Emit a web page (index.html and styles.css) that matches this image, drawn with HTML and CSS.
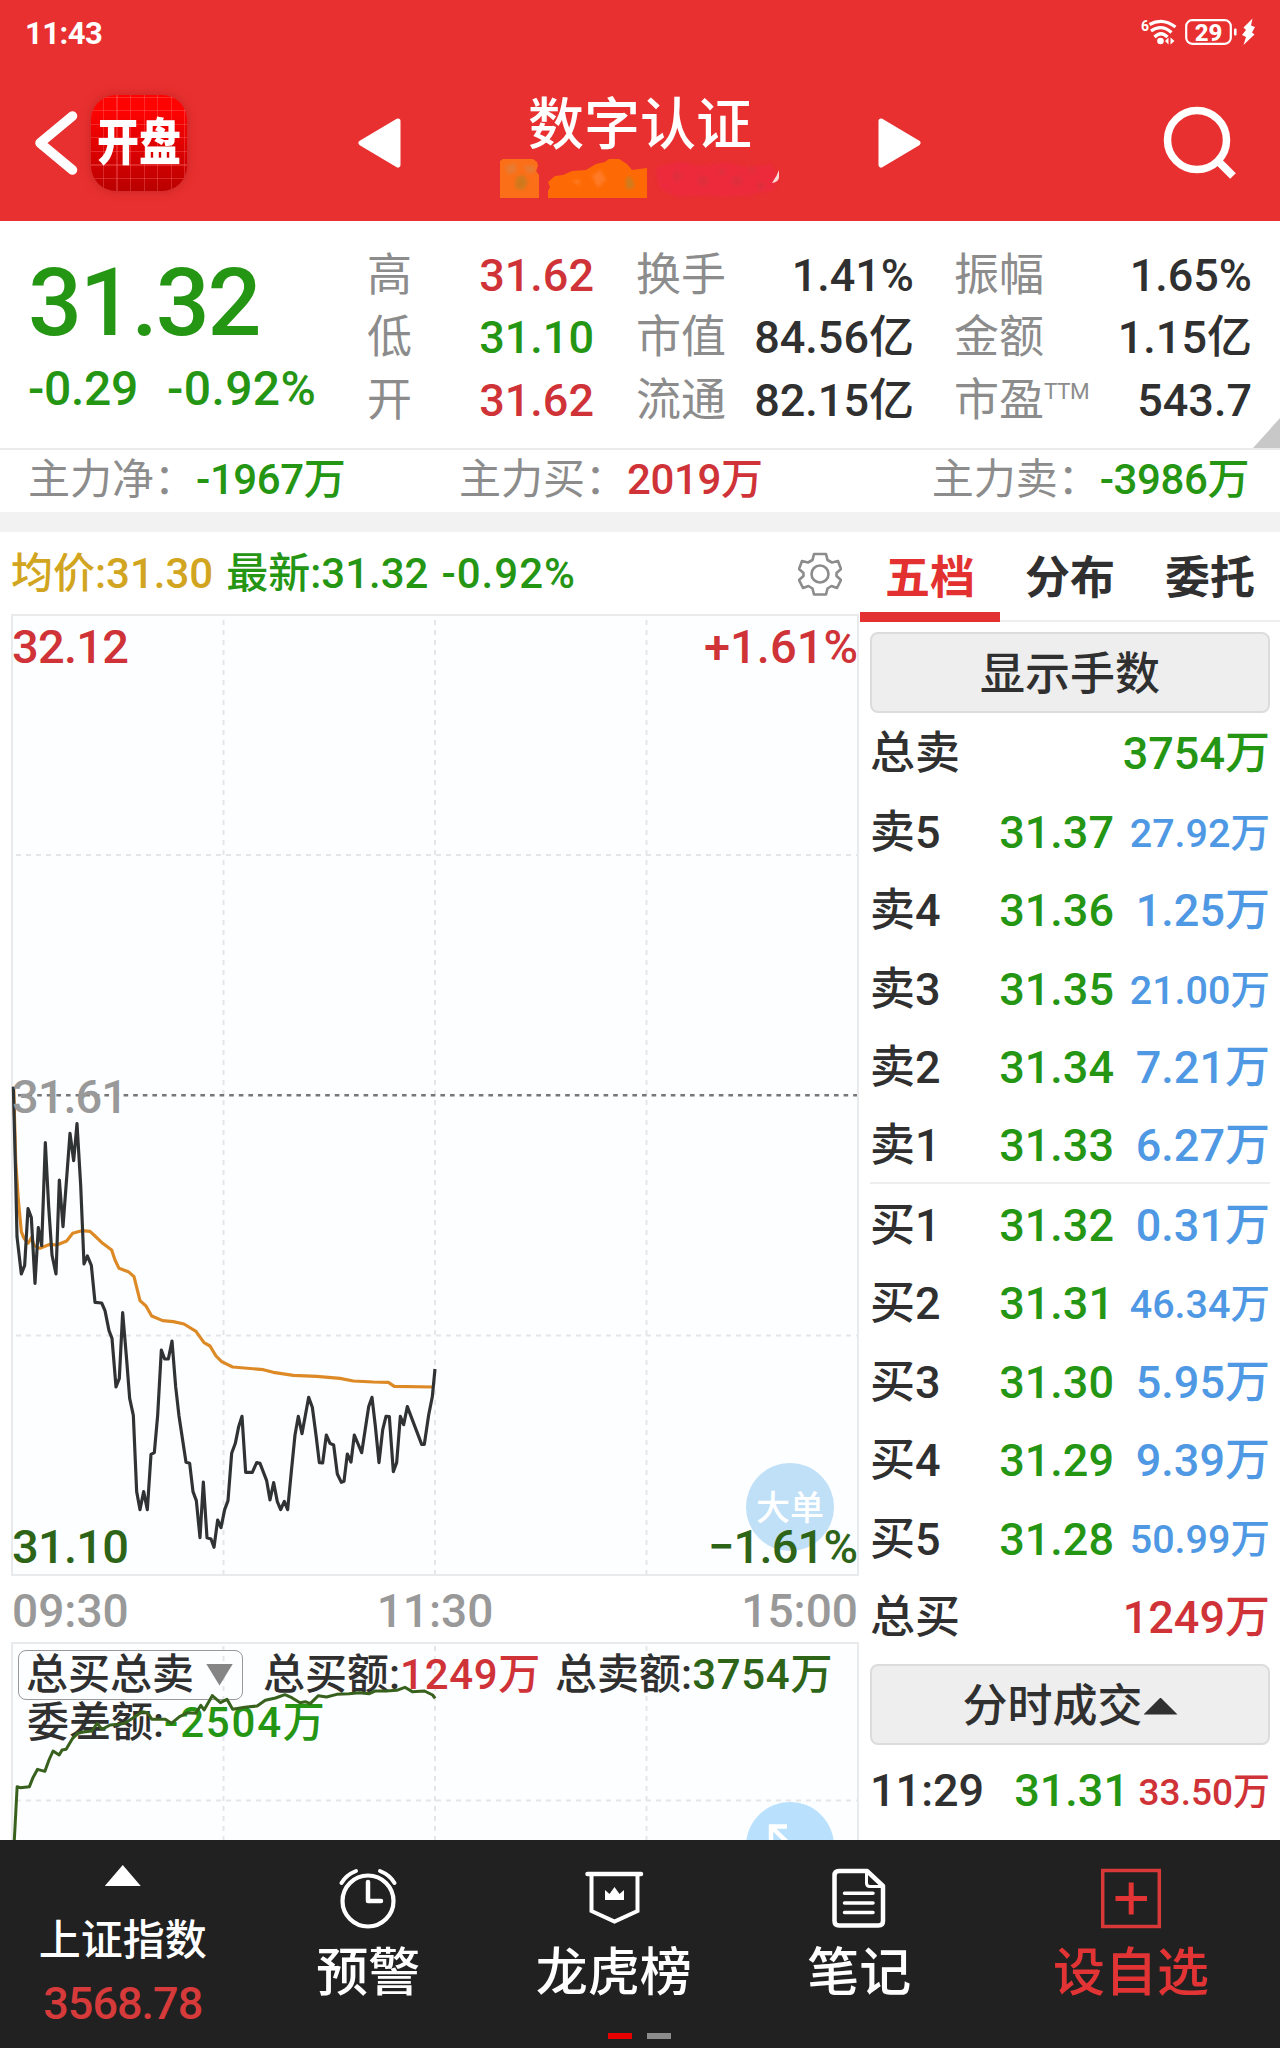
FILE: index.html
```html
<!DOCTYPE html>
<html lang="zh-CN">
<head>
<meta charset="utf-8">
<title>数字认证</title>
<link rel="stylesheet" href="styles.css">
</head>
<body>
<div class="app">
  <header class="top">
    <div class="status">
      <span class="clock">11:43</span>
      <svg class="status-icons" width="116" height="30" viewBox="1140 17 116 30">
        <text x="1141" y="30.500" class="wifi-gen" textLength="8" lengthAdjust="spacingAndGlyphs">6</text>
        <g fill="none" stroke="#fff" stroke-width="3.200">
          <path d="M1149.500 24.500Q1162.500 17 1175.500 27"/>
          <path d="M1151 31Q1161.500 23.500 1171.500 32.500"/>
          <path d="M1154.500 37Q1161 30.500 1167.500 37"/>
        </g>
        <circle cx="1160.500" cy="41" r="3.300" fill="#fff"/>
        <path d="M1168.500 37.500v7l-3.500-3.500zM1170.500 37.500v7l4-3.500z" fill="#fff"/>
        <rect x="1186.200" y="20.200" width="44.600" height="23.600" rx="6" fill="none" stroke="#fff" stroke-width="2.200"/>
        <text x="1208.500" y="40.500" text-anchor="middle" class="battery">29</text>
        <rect x="1234" y="28.500" width="2.600" height="7" rx="1" fill="#fff"/>
        <path d="M1252.500 18.500L1243.500 27.500L1246 30L1242 35L1246 37L1243.500 45L1254.500 34.500L1252 32.500L1255 27L1251 25.500Z" fill="#fff"/>
      </svg>
    </div>
    <div class="titlebar">
      <svg class="back" width="46" height="66" viewBox="0 0 46 66"><path d="M39.500 6L7 33L39.500 60" fill="none" stroke="#fff" stroke-width="9.500" stroke-linecap="round" stroke-linejoin="round"/></svg>
      <div class="logo"><span>开盘</span></div>
      <svg class="prev" width="46" height="52" viewBox="0 0 46 52"><path d="M42 4L5 26L42 48Z" fill="#fff" stroke="#fff" stroke-width="5" stroke-linejoin="round"/></svg>
      <div class="stock">
        <h1>数字认证</h1>
        <svg width="290" height="44" viewBox="495 157 290 44">
          <defs><filter id="soft" x="-10%" y="-20%" width="120%" height="140%"><feGaussianBlur stdDeviation="1.800"/></filter></defs>
          <path d="M500 161l3-2h30l4 3 1 4-2 5 3 4v23h-39z" fill="#fb6f18"/>
          <path d="M548 198v-7l2-4-2-5 7-6 8-1 9-4 14-1 10-6 9-2 4-3h10l8 5 5 6 15-2v30z" fill="#fd6a05"/>
          <g filter="url(#soft)">
            <path d="M505 166l10-3 2 8-9 4zM524 166l9-1 3 6-8 3z" fill="#e87a30"/>
            <path d="M516 177l8-2 4 8-5 7-8-2z" fill="#d0791d"/>
            <path d="M592 176l8-6 6 9-8 9zM572 182l6-3 3 6z" fill="#ff7a26"/>
            <path d="M626 178l4-2 4 7v5l-8 1z" fill="#cf7c1c"/>
            <path d="M655 168l25-7 20 5 26-4 23 5 22-3 8 14-5 12-24 5-23 2-25-2-24 2-18-8z" fill="#ee2a42" opacity=".6"/>
            <g fill="#d0323e" opacity=".45"><circle cx="677" cy="176" r="4"/><circle cx="703" cy="181" r="5"/><circle cx="722" cy="172" r="3"/><circle cx="737" cy="181" r="5"/><circle cx="752" cy="170" r="3"/><circle cx="761" cy="186" r="4"/></g>
          </g>
          <path d="M779 170Q777 176 772 183Q779 182 779 177Z" fill="#fbd9d5"/>
        </svg>
      </div>
      <svg class="next" width="46" height="52" viewBox="0 0 46 52"><path d="M4 4L41 26L4 48Z" fill="#fff" stroke="#fff" stroke-width="5" stroke-linejoin="round"/></svg>
      <svg class="search" width="76" height="76" viewBox="0 0 76 76"><circle cx="36" cy="35" r="29.500" fill="none" stroke="#fff" stroke-width="7.500"/><path d="M57 56L72 71" stroke="#fff" stroke-width="8"/></svg>
    </div>
  </header>

  <section class="quote">
    <div class="price">
      <strong>31.32</strong>
      <div class="change"><span>-0.29</span><span class="pct">-0.92%</span></div>
    </div>
    <dl class="stats s1">
      <div><dt>高</dt><dd class="red">31.62</dd></div>
      <div><dt>低</dt><dd class="green">31.10</dd></div>
      <div><dt>开</dt><dd class="red">31.62</dd></div>
    </dl>
    <dl class="stats s2">
      <div><dt>换手</dt><dd>1.41%</dd></div>
      <div><dt>市值</dt><dd>84.56亿</dd></div>
      <div><dt>流通</dt><dd>82.15亿</dd></div>
    </dl>
    <dl class="stats s3">
      <div><dt>振幅</dt><dd>1.65%</dd></div>
      <div><dt>金额</dt><dd>1.15亿</dd></div>
      <div><dt>市盈<sup>TTM</sup></dt><dd>543.7</dd></div>
    </dl>
    <i class="corner"></i>
  </section>

  <section class="flow">
    <div><span>主力净：</span><b class="green">-1967万</b></div>
    <div><span>主力买：</span><b class="red">2019万</b></div>
    <div><span>主力卖：</span><b class="green">-3986万</b></div>
  </section>

  <main class="main">
    <section class="left">
      <div class="legend">
        <span class="gold">均价:31.30</span><span class="green">最新:31.32</span><span class="green latest">-0.92%</span>
        <svg class="gear" width="44" height="46" viewBox="-22 -23 44 46"><g fill="none" stroke="#8c8c8c" stroke-width="2.600" stroke-linejoin="round"><path d="M-6-20H6L7.500-14L12-11.500L18-13L21-5L16.500-1V2L21 6L17 14L11.500 12L7.500 14.500L6 20.500H-6L-7.500 14.500L-11.500 12L-17 14L-21 6L-16.500 2V-1L-21-5L-18-13L-12-11.500L-7.500-14Z"/><circle r="8.500"/></g></svg>
      </div>
      <svg class="chart" width="860" height="962" viewBox="0 614 860 962">
        <rect x="12" y="615" width="846" height="960" class="frame"/>
        <path class="grid" d="M223.500 620V1574M435 620V1574M646.500 620V1574M16 855H857M16 1335.500H857"/>
        <circle cx="790" cy="1507" r="44" fill="#c0e0f7"/>
        <text x="790" y="1520" text-anchor="middle" class="bubble">大单</text>
        <path d="M18 1095.300H857" stroke="#777" stroke-width="2.500" stroke-dasharray="4.600 5"/>
        <g transform="translate(0 1060) scale(.33333)" fill="none" stroke-linejoin="round">
          <path stroke="#dd8a26" stroke-width="9.500" d="M41 80L47 300L55 420L64 515L72 535L84 550L95 532L102 556L120 565L150 553L170 555L200 543L218 520L245 512L270 514L285 528L308 550L335 570L345 600L357 625L385 635L402 650L420 722L438 738L455 768L488 782L520 785L552 792L588 814L612 848L630 858L648 888L665 905L698 921L790 929L820 937L880 946L950 949L1020 955L1060 963L1120 966L1165 967L1183 979L1300 981"/>
          <path stroke="#303333" stroke-width="9.500" d="M40 80L47 350L51 530L64 642L74 616L84 446L94 473L105 670L115 503L125 557L136 248L146 440L156 585L168 642L178 360L189 500L210 220L221 302L231 191L242 375L252 612L262 588L274 616L285 727L305 729L315 752L327 812L336 835L348 981L358 955L368 758L380 900L389 1015L400 1066L410 1295L420 1349L431 1295L442 1349L453 1183L463 1178L473 1066L484 870L494 897L505 897L516 843L527 980L537 1068L558 1207L569 1210L579 1295L589 1322L600 1433L610 1266L621 1433L633 1437L642 1462L653 1380L663 1403L674 1349L684 1322L695 1180L706 1150L716 1100L726 1069L737 1237L757 1237L770 1208L780 1210L800 1262L810 1320L821 1268L832 1325L842 1349L853 1324L863 1349L874 1235L885 1125L895 1069L906 1121L926 1012L937 1042L948 1125L958 1208L968 1209L979 1125L990 1150L1001 1155L1012 1242L1024 1267L1032 1264L1042 1182L1053 1206L1063 1125L1085 1178L1106 1040L1116 1012L1126 1098L1137 1208L1148 1110L1158 1069L1168 1070L1180 1235L1190 1208L1201 1069L1211 1094L1222 1040L1265 1153L1273 1153L1286 1065L1297 1010L1305 927"/>
        </g>
        <g class="axis">
          <text x="12" y="663" fill="#cf3338" textLength="117">32.12</text>
          <text x="858" y="663" fill="#cf3338" text-anchor="end" textLength="154">+1.61%</text>
          <text x="12" y="1113" fill="#999" textLength="116">31.61</text>
          <text x="12" y="1563" fill="#2d6418" textLength="117">31.10</text>
          <text x="858" y="1563" fill="#2d6418" text-anchor="end" textLength="150">−1.61%</text>
        </g>
      </svg>
      <div class="times"><span>09:30</span><span>11:30</span><span>15:00</span></div>
      <div class="sub">
        <svg class="subchart" width="860" height="200" viewBox="0 1642 860 200">
          <rect x="12" y="1643" width="846" height="220" class="frame"/>
          <path class="grid" d="M223.500 1646V1841M435 1646V1841M646.500 1646V1841M16 1800.500H857"/>
          <circle cx="790" cy="1846" r="44" fill="#b9e0fd"/>
          <path d="M771 1843V1826.500H787M772 1827.500L788 1843" fill="none" stroke="#fff" stroke-width="4.500"/>
        </svg>
        <div class="sub-row"><span class="select">总买总卖<i></i></span><span>总买额:<b class="red">1249万</b></span><span>总卖额:<b class="deep">3754万</b></span></div>
        <div class="sub-row second"><span>委差额:<b class="green">-2504万</b></span></div>
        <svg class="subchart" width="860" height="200" viewBox="0 1642 860 200">
          <g transform="translate(0 1560) scale(.40816 .33333)"><path vector-effect="non-scaling-stroke" fill="none" stroke="#38611d" stroke-width="3" stroke-linejoin="round" d="M35 842L42 680L50 683L72 680L80 655L92 628L110 634L120 600L130 573L145 585L152 570L162 568L178 535L190 520L205 516L225 513L238 490L250 508L270 495L290 493L305 490L325 475L348 455L362 458L372 478L405 478L420 490L440 470L460 458L480 460L492 436L500 450L520 407L540 428L556 418L570 448L600 442L630 438L650 421L675 414L698 404L715 413L735 428L748 425L760 431L780 407L800 411L825 403L855 401L880 398L905 401L920 393L945 393L972 391L992 382L1010 395L1040 393L1060 405L1066 415"/></g>
        </svg>
      </div>
    </section>

    <aside class="book">
      <nav class="tabs"><span class="on">五档</span><span>分布</span><span>委托</span></nav>
      <div class="btn">显示手数</div>
      <div class="row"><span>总卖</span><b class="sum green">3754万</b></div>
      <div class="row"><span>卖5</span><b>31.37</b><em class="small">27.92万</em></div>
      <div class="row"><span>卖4</span><b>31.36</b><em>1.25万</em></div>
      <div class="row"><span>卖3</span><b>31.35</b><em class="small">21.00万</em></div>
      <div class="row"><span>卖2</span><b>31.34</b><em>7.21万</em></div>
      <div class="row line"><span>卖1</span><b>31.33</b><em>6.27万</em></div>
      <div class="row"><span>买1</span><b>31.32</b><em>0.31万</em></div>
      <div class="row"><span>买2</span><b>31.31</b><em class="small">46.34万</em></div>
      <div class="row"><span>买3</span><b>31.30</b><em>5.95万</em></div>
      <div class="row"><span>买4</span><b>31.29</b><em>9.39万</em></div>
      <div class="row"><span>买5</span><b>31.28</b><em class="small">50.99万</em></div>
      <div class="row"><span>总买</span><b class="sum red">1249万</b></div>
      <div class="btn deals">分时成交<i></i></div>
      <div class="row tick"><span>11:29</span><b>31.31</b><em class="red">33.50万</em></div>
    </aside>
  </main>

  <footer class="nav">
    <div class="index"><i></i><span>上证指数</span><b>3568.78</b></div>
    <div class="item">
      <svg width="62" height="62" viewBox="337 1868 62 62"><g fill="none" stroke="#fff" stroke-linecap="round"><circle cx="368" cy="1901" r="25.500" stroke-width="4.200"/><path d="M368 1882V1901H381" stroke-width="4.500" stroke-linejoin="round"/><path d="M341.500 1883Q346 1875 356 1871M394.500 1883Q390 1875 380 1871" stroke-width="4"/></g></svg>
      <span>预警</span></div>
    <div class="item">
      <svg width="62" height="62" viewBox="582 1868 62 62"><path d="M586.500 1874H640" stroke="#fff" stroke-width="4.500" stroke-linecap="round"/><path d="M590.500 1874V1911L613.500 1921.500L636.500 1911V1874" fill="none" stroke="#fff" stroke-width="4"/><path d="M604 1900V1890L608.500 1894L613.500 1887L618.500 1894L623 1890V1900Z" fill="#fff"/></svg>
      <span>龙虎榜</span></div>
    <div class="item">
      <svg width="62" height="62" viewBox="828 1868 62 62"><g fill="none" stroke="#fff" stroke-linejoin="round"><path d="M867 1871H839Q834.500 1871 834.500 1875.500V1921Q834.500 1925.500 839 1925.500H878.500Q883 1925.500 883 1921V1886Z" stroke-width="4.500"/><path d="M866.500 1872V1883Q866.500 1886.500 870 1886.500H882" stroke-width="3"/><path d="M844.500 1893.300H873M844.500 1903H873M844.500 1912.500H873" stroke-width="3.500" stroke-linecap="round"/></g></svg>
      <span>笔记</span></div>
    <div class="item add">
      <svg width="62" height="62" viewBox="1100 1868 62 62"><rect x="1102.700" y="1870.500" width="56.600" height="56" fill="none" stroke="#d93838" stroke-width="3.500"/><path d="M1115.500 1898.500H1147M1131.200 1882.500V1914.500" stroke="#e23434" stroke-width="5"/></svg>
      <span>设自选</span></div>
    <div class="pages"><i class="cur"></i><i></i></div>
  </footer>
</div>
</body>
</html>
```
FILE: styles.css
```css
* { box-sizing: border-box; }
body { margin: 0; background: #fff; color: #303030; font-family: Roboto, "Noto Sans CJK SC", sans-serif; font-weight: 500; line-height: 1; }
h1, dl, dd { margin: 0; font-weight: 500; }
b, em, strong { font-weight: 500; font-style: normal; }
svg { display: block; flex: none; }
span, b, em, dt, dd { white-space: nowrap; }
.app { width: 1280px; height: 2048px; overflow: hidden; display: flex; flex-direction: column; }
.green { color: #259514; }
.red { color: #cf3338; }
.gold { color: #d2a520; }
.deep { color: #2d6418; }

.top { height: 221px; flex: none; background: #e83030; color: #fff; }
.status { height: 64px; padding: 17px 24px 0 25px; display: flex; justify-content: space-between; }
.clock { font-size: 31px; font-weight: 700; line-height: 33px; letter-spacing: -.5px; }
.wifi-gen { font-size: 15px; font-weight: 700; fill: #fff; }
.battery { font-size: 24px; font-weight: 800; fill: #fff; }
.titlebar { height: 157px; padding: 0 43px 0 33px; display: flex; align-items: center; }
.logo { width: 96px; height: 96px; margin-left: 12px; border-radius: 25px; display: flex; align-items: center; justify-content: center;
  background: repeating-linear-gradient(90deg, transparent 0 12px, #ff777755 12px 13.500px), repeating-linear-gradient(0deg, transparent 0 12px, #ff777755 12px 13.500px), linear-gradient(#ff0303 15%, #b90000);
  box-shadow: 0 0 10px #a51c1c88; }
.logo span { font-size: 42px; font-weight: 900; transform: scaleY(1.2); }
.prev { margin-left: 169px; }
.stock { width: 290px; height: 157px; margin: 0 0 0 93px; padding-top: 32px; display: flex; flex-direction: column; align-items: center; }
.stock h1 { font-size: 56px; height: 61px; line-height: 58px; }
.next { margin-left: 92px; }
.search { margin-left: auto; }

.quote { height: 229px; flex: none; position: relative; border-bottom: 2px solid #ebebeb; display: flex; }
.price { width: 368px; padding: 34px 0 0 28px; color: #259514; }
.price strong { display: block; font-size: 95px; line-height: 96px; letter-spacing: -2.200px; }
.change { display: flex; gap: 29px; margin-top: 13px; font-size: 48px; line-height: 50px; letter-spacing: -.300px; }
.change .pct { letter-spacing: .400px; }
.stats { display: flex; flex-direction: column; padding-top: 23px; font-size: 45px; }
.stats div { height: 62.600px; display: flex; justify-content: space-between; align-items: center; }
.stats dt { color: #8c8c8c; font-weight: 400; }
.stats dt { margin-left: -1px; }
.s1 { width: 226px; }
.s2 { width: 277px; margin-left: 43px; }
.s3 { width: 297px; margin-left: 41px; }
.stats sup { font-size: 22.500px; line-height: 0; vertical-align: 17px; font-weight: 400; letter-spacing: -.500px; }
.corner { position: absolute; right: 0; bottom: 0; width: 27px; height: 30px; background: #c8c8c8; clip-path: polygon(100% 0, 100% 100%, 0 100%); }

.flow { height: 62px; flex: none; padding: 0 31px 3px 28px; display: grid; grid-template-columns: 431px 1fr auto; align-items: center; font-size: 42px; }
.flow span { color: #8c8c8c; font-weight: 400; }
.flow b { letter-spacing: -.400px; }

.main { height: 1328px; flex: none; border-top: 20px solid #f2f2f2; display: flex; }
.left { width: 860px; flex: none; }
.legend { height: 82px; padding: 2px 18px 0 11px; display: flex; align-items: center; gap: 13px; font-size: 42px; }
.latest { letter-spacing: 1px; }
.gear { margin-left: auto; }
.frame { fill: #fcfeff; stroke: #e8eaec; stroke-width: 2; }
.grid { stroke: #e4e6e8; stroke-width: 2; stroke-dasharray: 5 5; fill: none; }
.bubble { font-size: 34px; fill: #fff; }
.axis { font-size: 47px; font-weight: 500; }
.times { height: 66px; padding: 3px 2px 0 12px; display: flex; align-items: center; justify-content: space-between; font-size: 46px; color: #999; }
.sub { height: 198px; position: relative; overflow: hidden; font-size: 42px; }
.subchart { position: absolute; left: 0; top: 0; }
.sub-row { position: relative; display: flex; align-items: center; padding: 7px 0 0 18px; height: 58px; }
.sub-row b { letter-spacing: .700px; }
.sub-row > span + span { margin-left: 14px; }
.sub-row .select + span { margin-left: 20px; }
.select { width: 225px; height: 50px; border: 1.500px solid #999; border-radius: 8px; padding-left: 7px; display: flex; align-items: center; }
.select i { width: 27px; height: 22px; margin-left: 12px; background: #858585; clip-path: polygon(0 0, 100% 0, 50% 100%); }
.second { height: 46px; padding: 0 0 0 27px; }
.second b { letter-spacing: 1.800px; }

.book { width: 420px; flex: none; }
.tabs { height: 90px; border-bottom: 2px solid #eee; display: flex; }
.tabs span { width: 140px; height: 90px; padding-top: 2px; display: flex; align-items: center; justify-content: center; font-size: 45px; font-weight: 700; border-bottom: 10px solid transparent; border-top: 10px solid transparent; }
.tabs .on { color: #e33131; border-bottom-color: #e33131; }
.btn { width: 400px; height: 81px; margin: 10px 0 0 10px; padding-top: 4px; background: #eee; border: 2px solid #dcdcdc; border-radius: 8px; display: flex; align-items: center; justify-content: center; font-size: 45px; }
.row { height: 78.550px; margin: 0 10px; display: grid; grid-template-columns: 118px 126px 1fr; align-items: center; font-size: 45px; padding-top: 3px; }
.row b { color: #259514; text-align: right; }
.row b.red { color: #cf3338; }
.row .sum { grid-column: 2 / 4; }
.row em { color: #4f98e3; text-align: right; }
.row em.red { color: #cf3338; font-size: 37px; }
.row .small { font-size: 39.500px; padding-top: 2px; }
.line { border-bottom: 2px solid #eee; }
.deals { margin-top: 8px; }
.deals i { width: 34px; height: 17px; background: #303030; clip-path: polygon(50% 0, 100% 100%, 0 100%); margin-left: 1px; }
.tick { height: 90px; grid-template-columns: 118px 141px 1fr; padding-top: 1px; }
.tick em { padding-top: 5px; }

.nav { flex: 1; background: #212121; color: #fff; position: relative; display: flex; }
.item { width: 245.500px; padding-top: 28px; display: flex; flex-direction: column; align-items: center; font-size: 52px; }
.item span { margin-top: 16px; line-height: 56px; }
.add { width: 298px; color: #e23434; }
.index { width: 245.500px; padding-top: 25px; display: flex; flex-direction: column; align-items: center; font-size: 42px; }
.index i { width: 36px; height: 21px; background: #fff; clip-path: polygon(50% 0, 100% 100%, 0 100%); }
.index span { margin-top: 34px; }
.index b { color: #d63a3a; font-size: 45px; margin-top: 19px; letter-spacing: -1px; }
.pages { position: absolute; left: 608px; bottom: 9px; display: flex; gap: 15px; }
.pages i { width: 24px; height: 6px; background: #8c8c8c; }
.pages .cur { background: #e60000; }
```
